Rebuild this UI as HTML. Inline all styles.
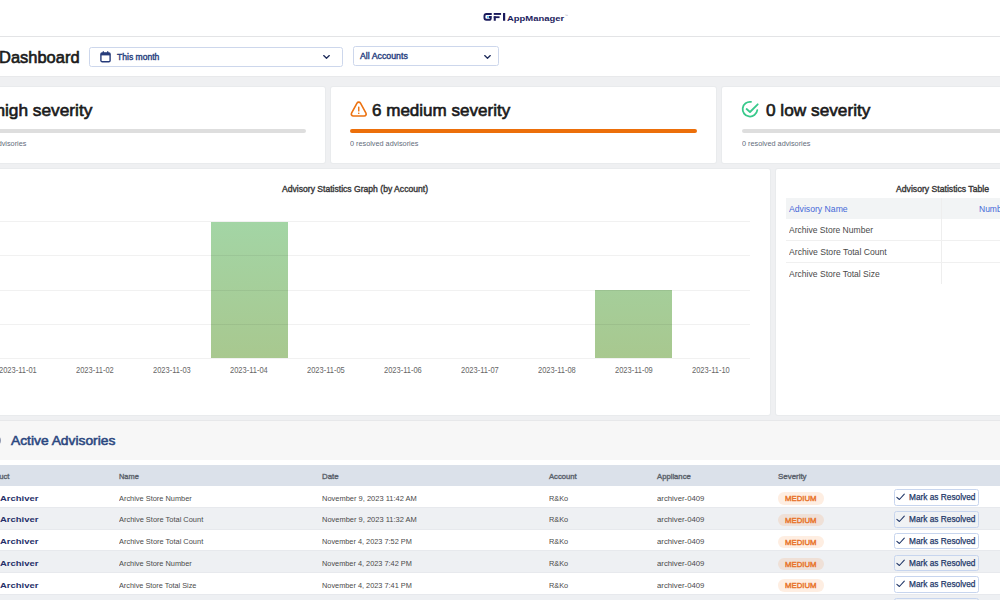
<!DOCTYPE html>
<html><head><meta charset="utf-8"><title>Dashboard</title>
<style>
*{box-sizing:border-box;margin:0;padding:0}
html,body{width:1000px;height:600px;overflow:hidden;background:#eff0f2;font-family:"Liberation Sans",sans-serif;color:#222}
#app{position:absolute;left:0;top:0;width:1000px;height:600px;overflow:hidden;background:#eff0f2}
.a{position:absolute}
.t{position:absolute;white-space:nowrap;transform-origin:0 50%;line-height:1}
.sel{position:absolute;background:#fff;border:1px solid #cdd7ec;border-radius:2.5px}
.card{position:absolute;top:87px;height:76px;background:#fff;border-radius:2px;box-shadow:0 0 0 1px #e9ebed}
.bar{position:absolute;height:3.8px;border-radius:2px;top:129.2px}
.panel{position:absolute;background:#fff;border-radius:2px;box-shadow:0 0 0 1px #e9ebed}
.gl{position:absolute;left:0;width:749.5px;height:1px;background:rgba(0,0,0,.055)}
.row{position:absolute;left:0;width:1000px;height:21.75px}
.badge{position:absolute;left:778.3px;width:45.4px;height:12.3px;border-radius:6.2px;background:rgba(243,112,20,.12)}
.btn{position:absolute;left:893.8px;width:85.2px;height:16.5px;border:1px solid #c7d5ee;border-radius:2.5px;background:rgba(255,255,255,.15)}
</style></head><body>
<div id="app">
<div class="a" style="left:0;top:0;width:1000px;height:76px;background:#fff;box-shadow:0 1px 0 #e8e9eb"></div>
<div class="a" style="left:0;top:36px;width:1000px;height:1px;background:#e3e4e6"></div>
<svg class="a" style="left:483px;top:12px" width="24" height="10" viewBox="0 0 24 10"><path d="M8.75 1.95 H3.4 Q1.45 1.95 1.45 3.9 V5.85 Q1.45 7.8 3.4 7.8 H5.9 Q7.8 7.8 7.8 5.9 V5 H5.9" fill="none" stroke="#1b1b5c" stroke-width="1.9"/><rect x="4.0" y="4.1" width="1.7" height="1.7" fill="#45b9f3"/><rect x="10.75" y="1" width="7.3" height="1.9" fill="#1b1b5c"/><rect x="10.75" y="4.3" width="5.8" height="1.8" fill="#1b1b5c"/><rect x="10.75" y="4.3" width="2.05" height="4.45" fill="#1b1b5c"/><rect x="20" y="1" width="2.2" height="7.75" fill="#1b1b5c"/></svg>
<div class="t" style="left:507.00px;top:15.25px;font-size:7.3px;color:#1d1d5e;transform:scaleX(1.2938);font-weight:bold">AppManager</div>
<div class="t" style="left:565.00px;top:15.40px;font-size:3.2px;color:#a8aab8;transform:scaleX(1.0000)">™</div>
<div class="t" style="left:-1.20px;top:49.30px;font-size:16.2px;color:#1a1a1a;transform:scaleX(1.0170);-webkit-text-stroke:0.62px #1a1a1a">Dashboard</div>
<div class="sel" style="left:89px;top:47.2px;width:254px;height:19.4px"></div>
<svg class="a" style="left:100px;top:50.6px" width="11" height="12" viewBox="0 0 11 12"><rect x="0.9" y="1.9" width="9.2" height="8.8" rx="1.3" fill="none" stroke="#263b7a" stroke-width="1.4"/><rect x="0.9" y="1.9" width="9.2" height="2.5" fill="#263b7a"/><rect x="2.7" y="0.2" width="1.2" height="2.4" fill="#263b7a"/><rect x="7.1" y="0.2" width="1.2" height="2.4" fill="#263b7a"/></svg>
<div class="t" style="left:116.60px;top:52.70px;font-size:9.2px;color:#27407e;transform:scaleX(0.9317);-webkit-text-stroke:0.4px #27407e">This month</div>
<svg class="a" style="left:322.1px;top:54.2px" width="9" height="6" viewBox="0 0 9 6"><path d="M1.7 1.6 L4.5 4.2 L7.3 1.6" fill="none" stroke="#1f2d5c" stroke-width="1.35" stroke-linecap="round" stroke-linejoin="round"/></svg>
<div class="sel" style="left:353.2px;top:46.4px;width:145.4px;height:19.4px"></div>
<div class="t" style="left:360.10px;top:52.00px;font-size:9.2px;color:#27407e;transform:scaleX(0.9558);-webkit-text-stroke:0.4px #27407e">All Accounts</div>
<svg class="a" style="left:483.2px;top:54.2px" width="9" height="6" viewBox="0 0 9 6"><path d="M1.7 1.6 L4.5 4.2 L7.3 1.6" fill="none" stroke="#1f2d5c" stroke-width="1.35" stroke-linecap="round" stroke-linejoin="round"/></svg>
<div class="card" style="left:-60px;width:385px"></div>
<div class="card" style="left:331px;width:385px"></div>
<div class="card" style="left:722px;width:385px"></div>
<div class="t" style="left:-18.90px;top:101.70px;font-size:17px;color:#1a1a1a;transform:scaleX(1.0163);-webkit-text-stroke:0.62px #1a1a1a">0 high severity</div>
<div class="bar" style="left:-41px;width:346.5px;background:#dedede"></div>
<div class="t" style="left:-41.70px;top:140.20px;font-size:7.8px;color:#646c7b;transform:scaleX(0.9335)">0 resolved advisories</div>
<svg class="a" style="left:349px;top:100px" width="20" height="19" viewBox="0 0 20 19"><path d="M8.00 3.16 A2 2 0 0 1 11.50 3.16 L16.96 13.03 A2 2 0 0 1 15.21 16 L4.29 16 A2 2 0 0 1 2.54 13.03 Z" fill="none" stroke="#ec7211" stroke-width="1.6"/><rect x="9.05" y="6.6" width="1.4" height="4.8" rx="0.5" fill="#ec7211"/><rect x="9.05" y="12.4" width="1.4" height="1.5" rx="0.5" fill="#ec7211"/></svg>
<div class="t" style="left:371.80px;top:101.70px;font-size:17px;color:#1a1a1a;transform:scaleX(1.0019);-webkit-text-stroke:0.62px #1a1a1a">6 medium severity</div>
<div class="bar" style="left:350px;width:347px;background:#ec6f0a"></div>
<div class="t" style="left:349.80px;top:140.20px;font-size:7.8px;color:#646c7b;transform:scaleX(0.9335)">0 resolved advisories</div>
<svg class="a" style="left:740px;top:99px" width="21" height="21" viewBox="0 0 21 21"><path d="M11.02 2.92 A7.35 7.35 0 1 0 17.28 11.22" fill="none" stroke="#38c98b" stroke-width="1.8" stroke-linecap="round"/><path d="M6.6 10 L10 13 L17.7 5.3" fill="none" stroke="#38c98b" stroke-width="1.8" stroke-linecap="round" stroke-linejoin="round"/></svg>
<div class="t" style="left:765.80px;top:101.70px;font-size:17px;color:#1a1a1a;transform:scaleX(1.0138);-webkit-text-stroke:0.62px #1a1a1a">0 low severity</div>
<div class="bar" style="left:741.6px;width:347px;background:#dedede"></div>
<div class="t" style="left:741.50px;top:140.20px;font-size:7.8px;color:#646c7b;transform:scaleX(0.9335)">0 resolved advisories</div>
<div class="panel" style="left:-60px;top:169px;width:830px;height:246px"></div>
<div class="t" style="left:281.60px;top:185.00px;font-size:9px;color:#383838;transform:scaleX(0.9539);-webkit-text-stroke:0.4px #383838">Advisory Statistics Graph (by Account)</div>
<div class="a" style="left:211px;top:221.5px;width:77.2px;height:136.4px;background:linear-gradient(#a3d5a5,#a8c88f)"></div>
<div class="a" style="left:595.3px;top:290px;width:77.2px;height:67.9px;background:linear-gradient(#a5ce9a,#a8c88f)"></div>
<div class="gl" style="top:221px"></div>
<div class="gl" style="top:255px"></div>
<div class="gl" style="top:290px"></div>
<div class="gl" style="top:324px"></div>
<div class="gl" style="top:358px"></div>
<div class="t" style="left:-0.70px;top:365.65px;font-size:8.3px;color:#666;transform:scaleX(0.9034)">2023-11-01</div>
<div class="t" style="left:76.27px;top:365.65px;font-size:8.3px;color:#666;transform:scaleX(0.9034)">2023-11-02</div>
<div class="t" style="left:153.24px;top:365.65px;font-size:8.3px;color:#666;transform:scaleX(0.9034)">2023-11-03</div>
<div class="t" style="left:230.21px;top:365.65px;font-size:8.3px;color:#666;transform:scaleX(0.9034)">2023-11-04</div>
<div class="t" style="left:307.18px;top:365.65px;font-size:8.3px;color:#666;transform:scaleX(0.9034)">2023-11-05</div>
<div class="t" style="left:384.15px;top:365.65px;font-size:8.3px;color:#666;transform:scaleX(0.9034)">2023-11-06</div>
<div class="t" style="left:461.12px;top:365.65px;font-size:8.3px;color:#666;transform:scaleX(0.9034)">2023-11-07</div>
<div class="t" style="left:538.09px;top:365.65px;font-size:8.3px;color:#666;transform:scaleX(0.9034)">2023-11-08</div>
<div class="t" style="left:615.06px;top:365.65px;font-size:8.3px;color:#666;transform:scaleX(0.9034)">2023-11-09</div>
<div class="t" style="left:692.03px;top:365.65px;font-size:8.3px;color:#666;transform:scaleX(0.9034)">2023-11-10</div>
<div class="panel" style="left:776px;top:169px;width:300px;height:246px"></div>
<div class="t" style="left:895.70px;top:185.00px;font-size:9px;color:#383838;transform:scaleX(0.9600);-webkit-text-stroke:0.4px #383838">Advisory Statistics Table</div>
<div class="a" style="left:785.5px;top:198px;width:215px;height:21px;background:#f2f4f5"></div>
<div class="a" style="left:940.6px;top:198px;width:1px;height:86px;background:#eeeeee"></div>
<div class="a" style="left:785.5px;top:240.2px;width:215px;height:1px;background:#f0f0f0"></div>
<div class="a" style="left:785.5px;top:262px;width:215px;height:1px;background:#f0f0f0"></div>
<div class="t" style="left:789.20px;top:203.90px;font-size:9.4px;color:#4668d8;transform:scaleX(0.9226)">Advisory Name</div>
<div class="t" style="left:979.00px;top:203.90px;font-size:9.4px;color:#4668d8;transform:scaleX(0.9063)">Number</div>
<div class="t" style="left:789.20px;top:225.00px;font-size:9.4px;color:#4a4a4a;transform:scaleX(0.9106)">Archive Store Number</div>
<div class="t" style="left:789.20px;top:246.70px;font-size:9.4px;color:#4a4a4a;transform:scaleX(0.9209)">Archive Store Total Count</div>
<div class="t" style="left:789.20px;top:268.50px;font-size:9.4px;color:#4a4a4a;transform:scaleX(0.9135)">Archive Store Total Size</div>
<div class="a" style="left:0;top:420px;width:1000px;height:180px;background:#fff"></div>
<div class="a" style="left:0;top:420px;width:1000px;height:1px;background:#e7e8ea"></div>
<div class="a" style="left:0;top:421px;width:1000px;height:38.5px;background:#f7f7f7"></div>
<div class="a" style="left:-10px;top:434.5px;width:11px;height:11px;border-radius:50%;border:2px solid #8f98b0"></div>
<div class="t" style="left:10.80px;top:433.80px;font-size:13.4px;color:#2b4780;transform:scaleX(1.0307);-webkit-text-stroke:0.55px #2b4780">Active Advisories</div>
<div class="a" style="left:0;top:465px;width:1000px;height:21px;background:#dbe1ea"></div>
<div class="t" style="left:-16.70px;top:473.00px;font-size:7.6px;color:#5a616b;transform:scaleX(1.0118);-webkit-text-stroke:0.35px #5a616b">Product</div>
<div class="t" style="left:118.80px;top:473.00px;font-size:7.6px;color:#5a616b;transform:scaleX(0.9767);-webkit-text-stroke:0.35px #5a616b">Name</div>
<div class="t" style="left:321.80px;top:473.00px;font-size:7.6px;color:#5a616b;transform:scaleX(1.0340);-webkit-text-stroke:0.35px #5a616b">Date</div>
<div class="t" style="left:548.80px;top:473.00px;font-size:7.6px;color:#5a616b;transform:scaleX(1.0051);-webkit-text-stroke:0.35px #5a616b">Account</div>
<div class="t" style="left:656.80px;top:473.00px;font-size:7.6px;color:#5a616b;transform:scaleX(1.0126);-webkit-text-stroke:0.35px #5a616b">Appliance</div>
<div class="t" style="left:777.80px;top:473.00px;font-size:7.6px;color:#5a616b;transform:scaleX(1.0418);-webkit-text-stroke:0.35px #5a616b">Severity</div>
<div class="row" style="top:486px;height:22px;background:#fff;border-bottom:1px solid #e7e9ed"></div>
<div class="t" style="left:-0.40px;top:494.60px;font-size:8.0px;color:#252e68;transform:scaleX(1.1799);font-weight:bold">Archiver</div>
<div class="t" style="left:118.80px;top:494.60px;font-size:8px;color:#4a4a4a;transform:scaleX(0.9251)">Archive Store Number</div>
<div class="t" style="left:321.80px;top:494.60px;font-size:8px;color:#4a4a4a;transform:scaleX(0.9353)">November 9, 2023 11:42 AM</div>
<div class="t" style="left:548.80px;top:494.60px;font-size:8px;color:#4a4a4a;transform:scaleX(0.9187)">R&amp;Ko</div>
<div class="t" style="left:656.80px;top:494.60px;font-size:8px;color:#4a4a4a;transform:scaleX(0.9690)">archiver-0409</div>
<div class="badge" style="top:492.40px"></div>
<div class="t" style="left:785.40px;top:495.40px;font-size:7.4px;color:#e8732a;transform:scaleX(1.0497);-webkit-text-stroke:0.4px #e8732a">MEDIUM</div>
<div class="btn" style="top:489.30px"></div>
<svg class="a" style="left:896.2px;top:493.30px" width="9" height="8" viewBox="0 0 9 8"><path d="M0.9 4.4 L3.4 6.5 L8.3 1.1" fill="none" stroke="#213768" stroke-width="1.1" stroke-linecap="round" stroke-linejoin="round"/></svg>
<div class="t" style="left:909.40px;top:493.30px;font-size:9px;color:#213768;transform:scaleX(0.9219);-webkit-text-stroke:0.25px #213768">Mark as Resolved</div>
<div class="row" style="top:508px;height:22px;background:#eef0f3;border-bottom:1px solid #e7e9ed"></div>
<div class="t" style="left:-0.40px;top:516.35px;font-size:8.0px;color:#252e68;transform:scaleX(1.1799);font-weight:bold">Archiver</div>
<div class="t" style="left:118.80px;top:516.35px;font-size:8px;color:#4a4a4a;transform:scaleX(0.9297)">Archive Store Total Count</div>
<div class="t" style="left:321.80px;top:516.35px;font-size:8px;color:#4a4a4a;transform:scaleX(0.9353)">November 9, 2023 11:32 AM</div>
<div class="t" style="left:548.80px;top:516.35px;font-size:8px;color:#4a4a4a;transform:scaleX(0.9187)">R&amp;Ko</div>
<div class="t" style="left:656.80px;top:516.35px;font-size:8px;color:#4a4a4a;transform:scaleX(0.9690)">archiver-0409</div>
<div class="badge" style="top:514.15px"></div>
<div class="t" style="left:785.40px;top:517.15px;font-size:7.4px;color:#e8732a;transform:scaleX(1.0497);-webkit-text-stroke:0.4px #e8732a">MEDIUM</div>
<div class="btn" style="top:511.05px"></div>
<svg class="a" style="left:896.2px;top:515.05px" width="9" height="8" viewBox="0 0 9 8"><path d="M0.9 4.4 L3.4 6.5 L8.3 1.1" fill="none" stroke="#213768" stroke-width="1.1" stroke-linecap="round" stroke-linejoin="round"/></svg>
<div class="t" style="left:909.40px;top:515.05px;font-size:9px;color:#213768;transform:scaleX(0.9219);-webkit-text-stroke:0.25px #213768">Mark as Resolved</div>
<div class="row" style="top:530px;height:21px;background:#fff;border-bottom:1px solid #e7e9ed"></div>
<div class="t" style="left:-0.40px;top:538.10px;font-size:8.0px;color:#252e68;transform:scaleX(1.1799);font-weight:bold">Archiver</div>
<div class="t" style="left:118.80px;top:538.10px;font-size:8px;color:#4a4a4a;transform:scaleX(0.9297)">Archive Store Total Count</div>
<div class="t" style="left:321.80px;top:538.10px;font-size:8px;color:#4a4a4a;transform:scaleX(0.9179)">November 4, 2023 7:52 PM</div>
<div class="t" style="left:548.80px;top:538.10px;font-size:8px;color:#4a4a4a;transform:scaleX(0.9187)">R&amp;Ko</div>
<div class="t" style="left:656.80px;top:538.10px;font-size:8px;color:#4a4a4a;transform:scaleX(0.9690)">archiver-0409</div>
<div class="badge" style="top:535.90px"></div>
<div class="t" style="left:785.40px;top:538.90px;font-size:7.4px;color:#e8732a;transform:scaleX(1.0497);-webkit-text-stroke:0.4px #e8732a">MEDIUM</div>
<div class="btn" style="top:532.80px"></div>
<svg class="a" style="left:896.2px;top:536.80px" width="9" height="8" viewBox="0 0 9 8"><path d="M0.9 4.4 L3.4 6.5 L8.3 1.1" fill="none" stroke="#213768" stroke-width="1.1" stroke-linecap="round" stroke-linejoin="round"/></svg>
<div class="t" style="left:909.40px;top:536.80px;font-size:9px;color:#213768;transform:scaleX(0.9219);-webkit-text-stroke:0.25px #213768">Mark as Resolved</div>
<div class="row" style="top:551px;height:22px;background:#eef0f3;border-bottom:1px solid #e7e9ed"></div>
<div class="t" style="left:-0.40px;top:559.85px;font-size:8.0px;color:#252e68;transform:scaleX(1.1799);font-weight:bold">Archiver</div>
<div class="t" style="left:118.80px;top:559.85px;font-size:8px;color:#4a4a4a;transform:scaleX(0.9251)">Archive Store Number</div>
<div class="t" style="left:321.80px;top:559.85px;font-size:8px;color:#4a4a4a;transform:scaleX(0.9179)">November 4, 2023 7:42 PM</div>
<div class="t" style="left:548.80px;top:559.85px;font-size:8px;color:#4a4a4a;transform:scaleX(0.9187)">R&amp;Ko</div>
<div class="t" style="left:656.80px;top:559.85px;font-size:8px;color:#4a4a4a;transform:scaleX(0.9690)">archiver-0409</div>
<div class="badge" style="top:557.65px"></div>
<div class="t" style="left:785.40px;top:560.65px;font-size:7.4px;color:#e8732a;transform:scaleX(1.0497);-webkit-text-stroke:0.4px #e8732a">MEDIUM</div>
<div class="btn" style="top:554.55px"></div>
<svg class="a" style="left:896.2px;top:558.55px" width="9" height="8" viewBox="0 0 9 8"><path d="M0.9 4.4 L3.4 6.5 L8.3 1.1" fill="none" stroke="#213768" stroke-width="1.1" stroke-linecap="round" stroke-linejoin="round"/></svg>
<div class="t" style="left:909.40px;top:558.55px;font-size:9px;color:#213768;transform:scaleX(0.9219);-webkit-text-stroke:0.25px #213768">Mark as Resolved</div>
<div class="row" style="top:573px;height:22px;background:#fff;border-bottom:1px solid #e7e9ed"></div>
<div class="t" style="left:-0.40px;top:581.60px;font-size:8.0px;color:#252e68;transform:scaleX(1.1799);font-weight:bold">Archiver</div>
<div class="t" style="left:118.80px;top:581.60px;font-size:8px;color:#4a4a4a;transform:scaleX(0.9129)">Archive Store Total Size</div>
<div class="t" style="left:321.80px;top:581.60px;font-size:8px;color:#4a4a4a;transform:scaleX(0.9179)">November 4, 2023 7:41 PM</div>
<div class="t" style="left:548.80px;top:581.60px;font-size:8px;color:#4a4a4a;transform:scaleX(0.9187)">R&amp;Ko</div>
<div class="t" style="left:656.80px;top:581.60px;font-size:8px;color:#4a4a4a;transform:scaleX(0.9690)">archiver-0409</div>
<div class="badge" style="top:579.40px"></div>
<div class="t" style="left:785.40px;top:582.40px;font-size:7.4px;color:#e8732a;transform:scaleX(1.0497);-webkit-text-stroke:0.4px #e8732a">MEDIUM</div>
<div class="btn" style="top:576.30px"></div>
<svg class="a" style="left:896.2px;top:580.30px" width="9" height="8" viewBox="0 0 9 8"><path d="M0.9 4.4 L3.4 6.5 L8.3 1.1" fill="none" stroke="#213768" stroke-width="1.1" stroke-linecap="round" stroke-linejoin="round"/></svg>
<div class="t" style="left:909.40px;top:580.30px;font-size:9px;color:#213768;transform:scaleX(0.9219);-webkit-text-stroke:0.25px #213768">Mark as Resolved</div>
<div class="row" style="top:595px;height:22px;background:#eef0f3;border-bottom:1px solid #e7e9ed"></div>
<div class="t" style="left:-0.40px;top:603.35px;font-size:8.0px;color:#252e68;transform:scaleX(1.1799);font-weight:bold">Archiver</div>
<div class="t" style="left:118.80px;top:603.35px;font-size:8px;color:#4a4a4a;transform:scaleX(0.9251)">Archive Store Number</div>
<div class="t" style="left:321.80px;top:603.35px;font-size:8px;color:#4a4a4a;transform:scaleX(0.9179)">November 4, 2023 7:40 PM</div>
<div class="t" style="left:548.80px;top:603.35px;font-size:8px;color:#4a4a4a;transform:scaleX(0.9187)">R&amp;Ko</div>
<div class="t" style="left:656.80px;top:603.35px;font-size:8px;color:#4a4a4a;transform:scaleX(0.9690)">archiver-0409</div>
<div class="badge" style="top:601.15px"></div>
<div class="t" style="left:785.40px;top:604.15px;font-size:7.4px;color:#e8732a;transform:scaleX(1.0497);-webkit-text-stroke:0.4px #e8732a">MEDIUM</div>
<div class="btn" style="top:598.05px"></div>
<svg class="a" style="left:896.2px;top:602.05px" width="9" height="8" viewBox="0 0 9 8"><path d="M0.9 4.4 L3.4 6.5 L8.3 1.1" fill="none" stroke="#213768" stroke-width="1.1" stroke-linecap="round" stroke-linejoin="round"/></svg>
<div class="t" style="left:909.40px;top:602.05px;font-size:9px;color:#213768;transform:scaleX(0.9219);-webkit-text-stroke:0.25px #213768">Mark as Resolved</div>
</div>
</body></html>
